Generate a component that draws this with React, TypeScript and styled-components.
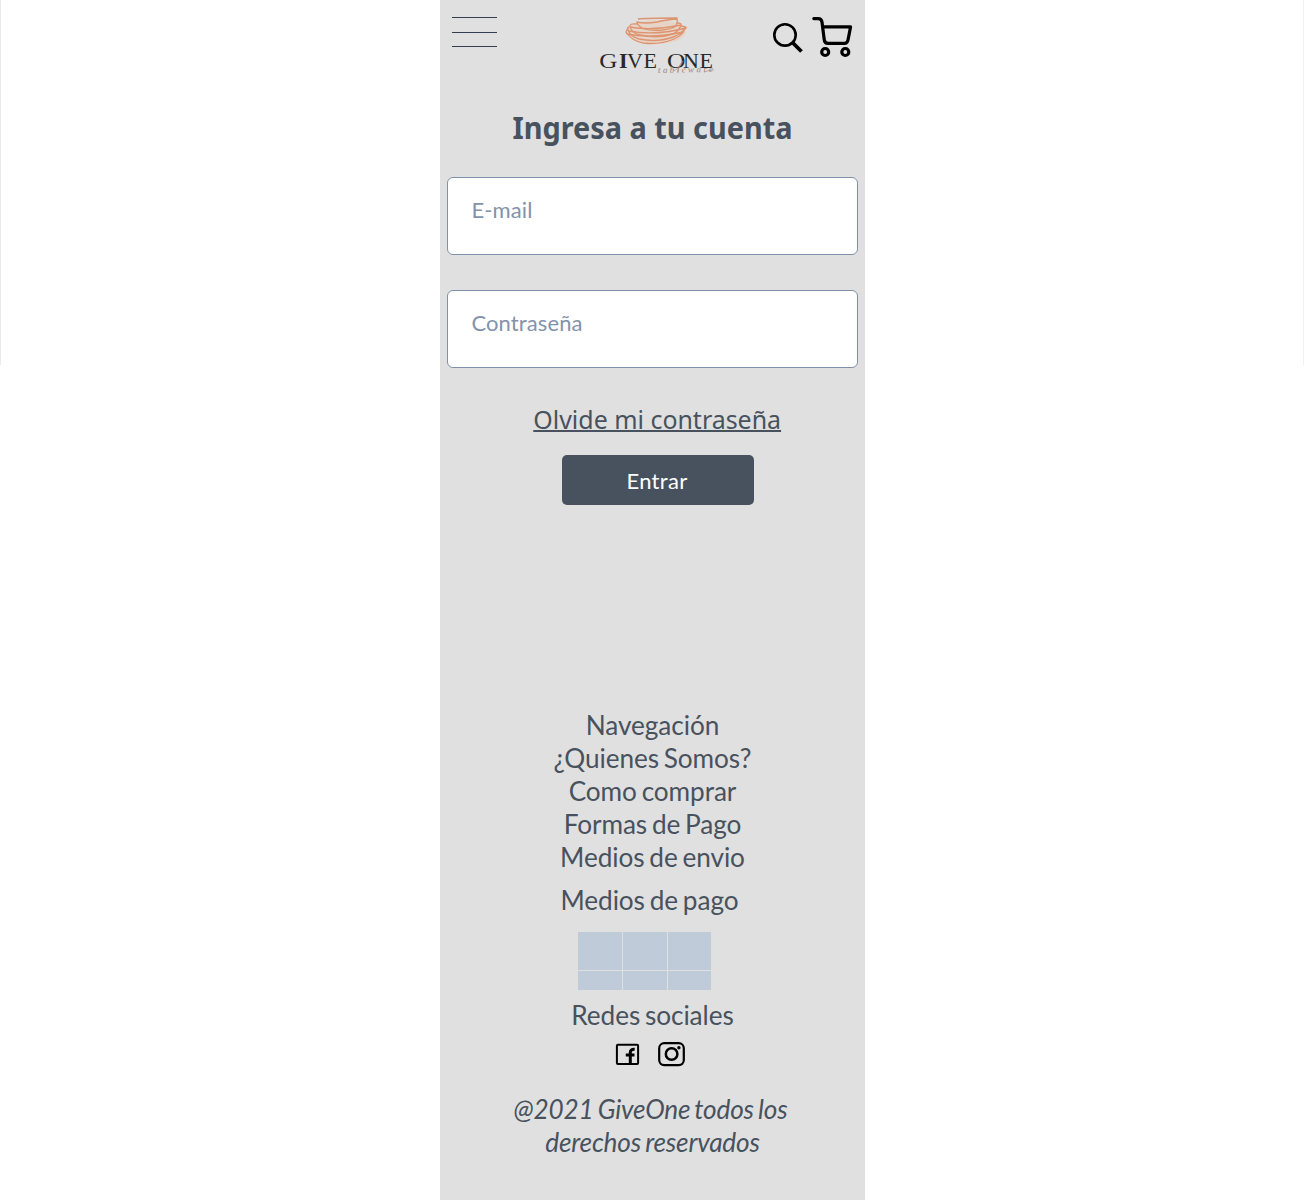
import React from "react";
import styled, { createGlobalStyle } from "styled-components";

const ink = "#48525e";

const GlobalStyle = createGlobalStyle`
  * { box-sizing: border-box; }
  body { margin: 0; background: #fff; }
`;

const Page = styled.div`
  display: flex;
  justify-content: center;
  height: 1200px;
  overflow: hidden;
  background: linear-gradient(#ebebeb, #ebebeb) left top / 1px 365px no-repeat,
    linear-gradient(#f1f1f1, #f1f1f1) right top / 1px 365px no-repeat, #fff;
`;

const Phone = styled.div`
  width: 425px;
  height: 1200px;
  margin-left: 1px;
  display: flex;
  flex-direction: column;
  background: #e0e0e0;
  color: ${ink};
  font-family: Lato, "Liberation Sans", sans-serif;
`;

const Header = styled.header`
  display: flex;
  align-items: flex-start;
  height: 84px;
  padding-left: 12px;
`;

const MenuButton = styled.button`
  display: flex;
  flex-direction: column;
  width: 45px;
  height: 31px;
  margin: 17px 103px 0 0;
  padding: 0;
  border: 0;
  background: none;
`;

const MenuLine = styled.span<{ $gap: number }>`
  height: 1px;
  margin-bottom: ${(p) => p.$gap}px;
  background: #333f50;
`;

const Logo = styled.svg`
  width: 115px;
  height: 60px;
  margin-top: 16px;
`;

const Actions = styled.div`
  display: flex;
  gap: 8px;
  margin: 16px 0 0 57px;
`;

const Title = styled.h1`
  margin: 20px 0 0;
  height: 47px;
  line-height: 46px;
  font-family: "Noto Sans", "Open Sans", sans-serif;
  font-size: 31px;
  font-weight: 700;
  text-align: center;
  white-space: nowrap;
  transform: scaleX(0.931);
`;

const Form = styled.form`
  display: flex;
  flex-direction: column;
  align-items: center;
  padding: 26px 7px 0;
`;

const Field = styled.input`
  width: 411px;
  height: 78px;
  margin-bottom: 35px;
  padding: 0 24px 13px 23.4px;
  border: 1px solid #8090aa;
  border-radius: 6px;
  background: #fff;
  font-family: inherit;
  font-size: 22px;
  letter-spacing: 0.12px;
  color: ${ink};
  &::placeholder { color: #8392ab; opacity: 1; }
`;

const Forgot = styled.a`
  height: 36px;
  margin: -1px 0 1px 9px;
  line-height: 34px;
  font-family: "Noto Sans", "Open Sans", sans-serif;
  font-size: 26px;
  text-decoration: underline;
  text-decoration-thickness: 2px;
  white-space: nowrap;
  transform: scaleX(0.959);
`;

const Submit = styled.button`
  width: 192px;
  height: 50px;
  margin: 16px 0 0 11px;
  padding: 0 2px 0 0;
  border: 0;
  border-radius: 5px;
  background: ${ink};
  color: #fff;
  font-family: inherit;
  font-size: 22px;
  letter-spacing: 0.3px;
`;

const Footer = styled.footer`
  display: flex;
  flex-direction: column;
  align-items: center;
  margin-top: 204px;
  font-size: 26.2px;
  letter-spacing: -0.08px;
  word-spacing: -1.8px;
  line-height: 33px;
  text-align: center;
`;

const Line = styled.div<{ $top?: number; $shift?: number }>`
  margin-top: ${(p) => p.$top ?? 0}px;
  margin-left: ${(p) => p.$shift ?? 0}px;
  white-space: nowrap;
`;

const PayGrid = styled.div`
  display: grid;
  grid-template-columns: 44px 44px 43px;
  grid-template-rows: 38px 19px;
  gap: 1px;
  margin: 15px 16px 0 0;
`;

const PayCell = styled.span`
  background: #c0cbd9;
`;

const Socials = styled.div`
  display: flex;
  gap: 18px;
  height: 25px;
  margin: 10px 5px 0 0;
`;

const Copyright = styled.p`
  display: flex;
  flex-direction: column;
  align-items: center;
  margin: 26px 4px 0 0;
  font-style: italic;
  letter-spacing: -0.18px;
`;

const links = ["Navegación", "¿Quienes Somos?", "Como comprar", "Formas de Pago", "Medios de envio"];

function BrandLogo() {
  return (
    <Logo viewBox="0 0 115 60" role="img" aria-label="Give One tableware">
      <ellipse cx="56" cy="16" rx="30" ry="12" fill="#efc5ae" opacity="0.45" />
      <g fill="none" stroke="#de946f" strokeWidth="1.35">
        <path d="M38 3Q46 2 77 2Q78 6 76 10Q72 13 62 14Q48 15 42 12Q37 9 37 6Q45 8 57 6Q65 4 77 3" />
        <path d="M37 8Q29 7 30 11Q51 15 81 9Q82 7 77 7M30 10Q31 17 40 19Q58 23 73 18Q79 15 81 9" />
        <path d="M29 11Q26 12 29 15Q55 20 86 12Q87 11 81 10M28 14Q31 21 39 23Q58 27 76 20Q82 17 86 12" />
        <path d="M28 13Q25 15 27 18Q52 23 83 16M26 16Q32 25 43 27Q60 29 74 23Q81 20 84 15" />
      </g>
      <g fontFamily="Liberation Serif, serif" fill="#292929" fontSize="22">
        <text transform="translate(-0.7 52.3) scale(1.14 1)">G</text>
        <text x="19" y="52.3" fontWeight="700">I</text>
        <text x="27" y="52.3">V</text>
        <text x="43.5" y="52.3">E</text>
        <text transform="translate(67 52.3) scale(1.16 1)">O</text>
        <text x="83 99.5" y="52.3">NE</text>
      </g>
      <text x="58" y="57" fontFamily="Liberation Serif, serif" fontStyle="italic" fontSize="9" fill="#a58278" textLength="55" transform="rotate(-1 58 57)">tableware</text>
      <path d="M74 55Q83 48 83 45Q79 48 78 56M104 56Q109 54 114 54" fill="none" stroke="#a58278" strokeWidth="0.6" />
    </Logo>
  );
}

function SearchIcon() {
  return (
    <svg width="32" height="40" viewBox="0 0 32 40" fill="none" stroke="#000">
      <circle cx="13" cy="18.9" r="10.7" strokeWidth="2.6" />
      <path d="M20.5 26.5L29.5 35.5" strokeWidth="3.8" />
    </svg>
  );
}

function CartIcon() {
  return (
    <svg width="42" height="42" viewBox="0 0 42 42" fill="none" stroke="#000" strokeWidth="3.2" strokeLinecap="round" strokeLinejoin="round">
      <path d="M1.8 2.6H6.2Q9.5 2.6 10 6L12.2 23.5Q12.6 27.4 16 27.4H32.4Q35.4 27.4 36 24L38.6 10.8H10.5" />
      <circle cx="13.2" cy="36" r="3.5" />
      <circle cx="33.3" cy="36" r="3.5" />
    </svg>
  );
}

function FacebookIcon() {
  return (
    <svg width="25" height="25" viewBox="0 0 25 25" fill="none" stroke="#000">
      <rect x="1.9" y="2.8" width="21.2" height="19.2" rx="1" strokeWidth="2" />
      <path d="M15.3 22V10.5Q15.3 7 19.7 7.3M10.8 13H19.5" strokeWidth="3" />
    </svg>
  );
}

function InstagramIcon() {
  return (
    <svg width="27" height="25" viewBox="0 0 27 25" fill="none" stroke="#000">
      <rect x="1.2" y="1.2" width="24.6" height="21.9" rx="5" strokeWidth="2.2" />
      <circle cx="13.6" cy="12" r="5.8" strokeWidth="2.5" />
      <circle cx="20.9" cy="5.8" r="1.7" fill="#000" stroke="none" />
    </svg>
  );
}

export default function App() {
  return (
    <Page>
      <GlobalStyle />
      <Phone>
        <Header>
          <MenuButton aria-label="Menú">
            <MenuLine $gap={14} />
            <MenuLine $gap={13} />
            <MenuLine $gap={0} />
          </MenuButton>
          <BrandLogo />
          <Actions>
            <SearchIcon />
            <CartIcon />
          </Actions>
        </Header>
        <Title>Ingresa a tu cuenta</Title>
        <Form>
          <Field type="email" placeholder="E-mail" />
          <Field type="password" placeholder="Contraseña" />
          <Forgot>Olvide mi contraseña</Forgot>
          <Submit type="button">Entrar</Submit>
        </Form>
        <Footer>
          {links.map((label) => (
            <Line key={label}>{label}</Line>
          ))}
          <Line $top={10} $shift={-6}>Medios de pago</Line>
          <PayGrid>
            {Array.from({ length: 6 }, (_, i) => (
              <PayCell key={i} />
            ))}
          </PayGrid>
          <Line $top={9}>Redes sociales</Line>
          <Socials>
            <FacebookIcon />
            <InstagramIcon />
          </Socials>
          <Copyright>
            <Line as="span">@2021 GiveOne todos los</Line>
            <Line as="span" $shift={4}>derechos reservados</Line>
          </Copyright>
        </Footer>
      </Phone>
    </Page>
  );
}
